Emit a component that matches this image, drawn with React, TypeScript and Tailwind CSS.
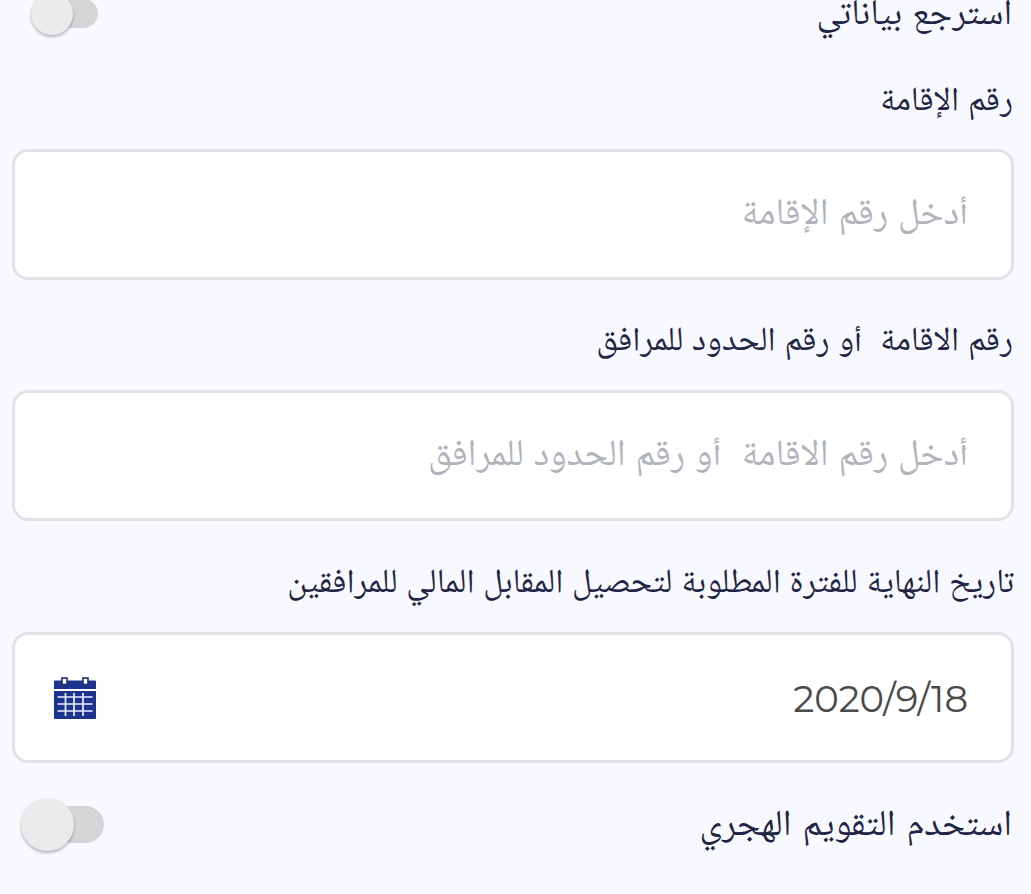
import type { ReactNode } from "react";

const arabic = "whitespace-pre font-['Noto_Naskh_Arabic_UI','Noto_Naskh_Arabic','DejaVu_Sans_Condensed',sans-serif]";

function Label({ children }: { children: ReactNode }) {
  return <label className={`${arabic} block pr-px text-[33.8px] leading-[50px] [word-spacing:1.3px] text-[#1f2544]`}>{children}</label>;
}

function Placeholder({ children }: { children: ReactNode }) {
  return <span className={`${arabic} pt-px text-[37.2px] leading-[56px] [word-spacing:1.7px] text-[#b1b4bd]`}>{children}</span>;
}

function Box({ children }: { children: ReactNode }) {
  return (
    <div className="flex h-[131px] shrink-0 items-center justify-between rounded-2xl border-[3px] border-[#e1e2e8] bg-white pr-[43px] pl-[39px]">
      {children}
    </div>
  );
}

function CalendarIcon() {
  return (
    <svg className="mt-0.5 h-[43px] w-[42px]" viewBox="0 0 42 43" fill="none" aria-hidden="true">
      <path d="M1 3.5h40a1 1 0 0 1 1 1V12H0V4.500a1 1 0 0 1 1-1Z" fill="#1c338f" />
      <path d="M0 14h42v27a1 1 0 0 1-1 1H1a1 1 0 0 1-1-1Z" fill="#1c338f" />
      <rect x="8" y="1" width="5" height="6.5" fill="white" stroke="#1b2f72" strokeWidth="1.6" />
      <rect x="29" y="1" width="5" height="6.5" fill="white" stroke="#1b2f72" strokeWidth="1.6" />
      <path d="M3.5 20h35M3.5 27h35M3.5 34h35M11.5 16v23M20 16v23M29 16v23" stroke="#eef1ff" strokeWidth="1.7" />
    </svg>
  );
}

export default function App() {
  return (
    <main dir="rtl" className="flex h-[894px] flex-col overflow-hidden bg-[#f8f9ff] pr-[17px] pl-3">
      <div className="-mt-[15px] flex h-[57px] shrink-0 items-center justify-between">
        <span className={`${arabic} pt-1 pr-0.5 text-[36px] leading-[54px] [word-spacing:2px] text-[#1f2544]`}>استرجع بياناتي</span>
        <div className="ml-[19px] flex h-[29px] w-[67px] items-center justify-end rounded-full bg-[#d5d5d5]">
          <div className="size-[42px] shrink-0 rounded-full bg-[#ebebeb] shadow-[0_2px_3px_rgba(0,0,0,0.28)]" />
        </div>
      </div>
      <div className="flex h-[107px] shrink-0 items-center pt-3">
        <Label>رقم الإقامة</Label>
      </div>
      <Box>
        <Placeholder>أدخل رقم الإقامة</Placeholder>
      </Box>
      <div className="flex h-[110px] shrink-0 items-center pt-3.5">
        <Label>رقم الاقامة  أو رقم الحدود للمرافق</Label>
      </div>
      <Box>
        <Placeholder>أدخل رقم الاقامة  أو رقم الحدود للمرافق</Placeholder>
      </Box>
      <div className="-mr-px flex h-[111px] shrink-0 items-center pt-3.5">
        <Label>تاريخ النهاية للفترة المطلوبة لتحصيل المقابل المالي للمرافقين</Label>
      </div>
      <Box>
        <span dir="ltr" className="font-['Montserrat','Inter',sans-serif] pt-0.5 text-[37px] leading-[48px] text-[#4a4a4a]">
          2020/9/18
        </span>
        <CalendarIcon />
      </Box>
      <div className="flex h-[122px] shrink-0 items-center justify-between">
        <span className={`${arabic} pt-1 pr-0.5 text-[36.6px] leading-[54px] [word-spacing:3px] text-[#1f2544]`}>استخدم التقويم الهجري</span>
        <div className="ml-[9px] flex h-[37px] w-[83px] items-center justify-end rounded-full bg-[#d5d5d5]">
          <div className="size-[53px] shrink-0 rounded-full bg-[#ebebeb] shadow-[0_2px_3px_rgba(0,0,0,0.28)]" />
        </div>
      </div>
    </main>
  );
}
